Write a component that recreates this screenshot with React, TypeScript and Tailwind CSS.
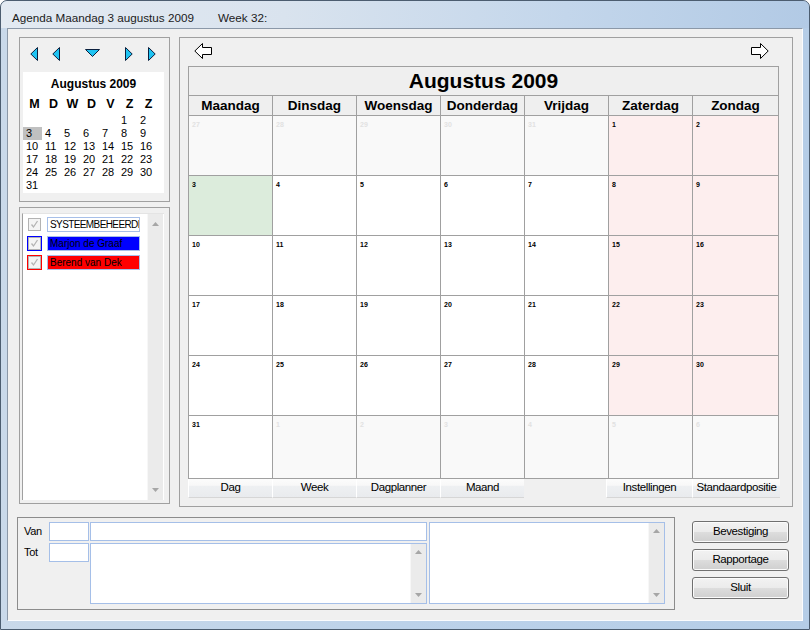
import React from "react";

const FONT = "font-['Liberation_Sans',Arial,Helvetica,sans-serif]";

function SmallTri({ d }: { d: "l" | "r" | "d" }) {
  if (d === "l")
    return (
      <svg width="8" height="14" viewBox="0 0 8 14">
        <polygon points="7.5,0.5 7.5,13.5 0.8,7" fill="#1ec3f2" stroke="#0b1f3d" strokeWidth="1" />
      </svg>
    );
  if (d === "r")
    return (
      <svg width="8" height="14" viewBox="0 0 8 14">
        <polygon points="0.5,0.5 0.5,13.5 7.2,7" fill="#1ec3f2" stroke="#0b1f3d" strokeWidth="1" />
      </svg>
    );
  return (
    <svg width="15" height="8" viewBox="0 0 15 8">
      <polygon points="0.5,0.5 14.5,0.5 7.5,7.5" fill="#1ec3f2" stroke="#0b1f3d" strokeWidth="1" />
    </svg>
  );
}

function BigArrow({ right }: { right?: boolean }) {
  return (
    <svg width="18" height="16" viewBox="0 0 18 16" className={right ? "-scale-x-100" : ""}>
      <path d="M0.8 8 L8.5 0.5 L8.5 4.5 L17.5 4.5 L17.5 11.5 L8.5 11.5 L8.5 15.5 Z" fill="white" stroke="black" strokeWidth="1" />
    </svg>
  );
}

function ScrollUp() {
  return (
    <svg width="7" height="4" viewBox="0 0 7 4">
      <polygon points="3.5,0 7,4 0,4" fill="#a6a6a6" />
    </svg>
  );
}
function ScrollDown() {
  return (
    <svg width="7" height="4" viewBox="0 0 7 4">
      <polygon points="0,0 7,0 3.5,4" fill="#a6a6a6" />
    </svg>
  );
}

function ScrollBar({ pad }: { pad: "list" | "area" }) {
  return (
    <div
      className={
        "w-[16px] h-full bg-[#ebebeb] border-l border-[#f7f7f7] flex flex-col justify-between items-center " +
        (pad === "list" ? "py-[8px]" : "py-[6px]")
      }
    >
      <ScrollUp />
      <ScrollDown />
    </div>
  );
}

function CheckBox() {
  return (
    <div className="w-[13px] h-[13px] border border-[#b3b3b3] bg-[#f4f4f4] flex items-center justify-center">
      <svg width="9" height="9" viewBox="0 0 9 9">
        <path d="M1.5 4.5 L3.5 7 L7.5 1" fill="none" stroke="#b4b4b4" strokeWidth="1.3" />
      </svg>
    </div>
  );
}

type CellKind = "out" | "in" | "we" | "today";

function buildWeeks(): { n: number; k: CellKind }[][] {
  const weeks: { n: number; k: CellKind }[][] = [];
  const first: { n: number; k: CellKind }[] = [
    { n: 27, k: "out" },
    { n: 28, k: "out" },
    { n: 29, k: "out" },
    { n: 30, k: "out" },
    { n: 31, k: "out" },
    { n: 1, k: "we" },
    { n: 2, k: "we" },
  ];
  weeks.push(first);
  let d = 3;
  for (let w = 0; w < 4; w++) {
    const row: { n: number; k: CellKind }[] = [];
    for (let i = 0; i < 7; i++) {
      row.push({ n: d, k: d === 3 ? "today" : i >= 5 ? "we" : "in" });
      d++;
    }
    weeks.push(row);
  }
  const last: { n: number; k: CellKind }[] = [{ n: 31, k: "in" }];
  for (let i = 1; i <= 6; i++) last.push({ n: i, k: "out" });
  weeks.push(last);
  return weeks;
}

const DAYS = ["Maandag", "Dinsdag", "Woensdag", "Donderdag", "Vrijdag", "Zaterdag", "Zondag"];

function MiniCalendar() {
  const rows: (number | null)[][] = [
    [null, null, null, null, null, 1, 2],
    [3, 4, 5, 6, 7, 8, 9],
    [10, 11, 12, 13, 14, 15, 16],
    [17, 18, 19, 20, 21, 22, 23],
    [24, 25, 26, 27, 28, 29, 30],
    [31, null, null, null, null, null, null],
  ];
  const heads = ["M", "D", "W", "D", "V", "Z", "Z"];
  return (
    <div className="ml-[3px] w-[141px] h-[121px] bg-white flex flex-col">
      <div className="h-[22px] flex items-center justify-center text-[12px] font-bold text-black pt-[1px]">
        Augustus 2009
      </div>
      <div className="h-[20px] grid grid-cols-[repeat(7,19px)] pl-[2px] items-center">
        {heads.map((h, i) => (
          <div key={i} className="text-center text-[12.5px] font-bold text-black leading-none">
            {h}
          </div>
        ))}
      </div>
      {rows.map((r, ri) => (
        <div key={ri} className="h-[13px] grid grid-cols-[repeat(7,19px)]">
          {r.map((n, ci) => (
            <div
              key={ci}
              className={
                "h-[13px] pl-[3px] text-[11px] leading-[13px] text-black " + (n === 3 ? "bg-[#c0c0c0]" : "")
              }
            >
              {n ?? ""}
            </div>
          ))}
        </div>
      ))}
    </div>
  );
}

function ListItem({ label, bg, frame, track }: { label: string; bg: string; frame: string; track: string }) {
  return (
    <div className="h-[15px] flex items-center">
      <div className={"ml-[4px] w-[15px] h-[15px] border flex items-center justify-center " + frame}>
        <CheckBox />
      </div>
      <div
        className={
          "ml-[5px] w-[93px] h-[15px] border border-[#a7bfe8] overflow-hidden whitespace-nowrap pl-[2px] text-[10px] leading-[13px] text-black " +
          bg +
          " " +
          track
        }
      >
        {label}
      </div>
    </div>
  );
}

function Tab({ label, w }: { label: string; w: string }) {
  return (
    <div
      className={
        "h-[19px] border-b border-b-[#d6d6d6] border-l border-l-white bg-[linear-gradient(to_bottom,#fcfcfc_0%,#f8f8f8_35%,#eef0f2_40%,#e9ebee_100%)] flex items-center justify-center text-[11.5px] tracking-[-0.4px] text-black whitespace-nowrap " +
        w
      }
    >
      {label}
    </div>
  );
}

function WinButton({ label }: { label: string }) {
  return (
    <div className="w-[97px] h-[22px] rounded-[3px] border border-[#707070] bg-[linear-gradient(to_bottom,#f2f2f2_0%,#ebebeb_50%,#dddddd_51%,#cfcfcf_100%)] shadow-[inset_0_0_0_1px_#fbfbfb] flex items-center justify-center text-[11.5px] tracking-[-0.4px] text-black">
      {label}
    </div>
  );
}

export default function App() {
  const weeks = buildWeeks();
  return (
    <div className={"w-[810px] h-[630px] overflow-hidden bg-white " + FONT}>
      <div className="w-[810px] h-[630px] flex flex-col rounded-t-[7px] border border-[#4c5d70] bg-[linear-gradient(to_right,#c9d9ea,#bcd2ea_50%,#b5cde7)] px-[6px] pb-[8px] overflow-hidden">
        {/* Title bar */}
        <div className="-mx-[6px] h-[27px] pt-[6px] pl-[11px] flex bg-[linear-gradient(to_right,#e3eaf2_0%,#d9e3ee_35%,#c3d6eb_70%,#b2cae5_100%)] text-[11.7px] leading-[21px] text-[#1b1b1b] rounded-t-[6px]">
          <span>Agenda Maandag 3 augustus 2009</span>
          <span className="ml-[24px]">Week 32:</span>
        </div>

        {/* Client area */}
        <div className="flex-1 border border-t-[#8b98a8] border-l-[#8b98a8] border-r-[#fbfcfe] border-b-[#fbfcfe] bg-[#f0f0f0] flex flex-col">
          {/* Top row */}
          <div className="flex pt-[8px] pl-[11px]">
            {/* Left column */}
            <div className="w-[151px] flex flex-col gap-[5px]">
              <div className="h-[165px] border border-[#a0a0a0] flex flex-col">
                <div className="h-[34px] flex items-start pt-[9px]">
                  <div className="ml-[10px]">
                    <SmallTri d="l" />
                  </div>
                  <div className="ml-[14px]">
                    <SmallTri d="l" />
                  </div>
                  <div className="ml-[25px] mt-[2px]">
                    <SmallTri d="d" />
                  </div>
                  <div className="ml-[25px]">
                    <SmallTri d="r" />
                  </div>
                  <div className="ml-[15px]">
                    <SmallTri d="r" />
                  </div>
                </div>
                <MiniCalendar />
              </div>
              <div className="h-[297px] border border-[#a0a0a0] pt-[5px] pl-[2px]">
                <div className="w-[142px] h-[287px] bg-white border-l border-t border-l-[#a0a0a0] border-t-[#e4e4e4] flex">
                  <div className="flex-1 flex flex-col gap-[4px] pt-[3px]">
                    <ListItem label="SYSTEEMBEHEERDER" bg="bg-white" frame="border-transparent" track="tracking-[-0.6px]" />
                    <ListItem label="Marjon de Graaf" bg="bg-[#0000ff]" frame="border-[#0000ff]" track="tracking-[0px]" />
                    <ListItem label="Berend van Dek" bg="bg-[#ff0000]" frame="border-[#ff0000]" track="tracking-[0px]" />
                  </div>
                  <div className="mr-[1px] h-full">
                    <ScrollBar pad="list" />
                  </div>
                </div>
              </div>
            </div>

            {/* Main calendar panel */}
            <div className="ml-[9px] w-[614px] h-[470px] border border-[#a0a0a0] flex flex-col">
              <div className="h-[28px] flex justify-between items-start pt-[5px] pl-[14px] pr-[23px]">
                <BigArrow />
                <BigArrow right />
              </div>
              <div className="ml-[8px] w-[591px] grid grid-cols-[84px_84px_84px_84px_84px_84px_86px] border-l border-t border-[#a0a0a0]">
                <div className="col-span-7 h-[29px] border-r border-b border-[#a0a0a0] bg-[#efefef] flex items-center justify-center text-[21px] font-bold leading-[28px] text-black">
                  Augustus 2009
                </div>
                {DAYS.map((d) => (
                  <div
                    key={d}
                    className="h-[20px] border-r border-b border-[#a0a0a0] bg-[#efefef] flex items-center justify-center text-[13.5px] font-bold text-black leading-none pt-[1px]"
                  >
                    {d}
                  </div>
                ))}
                {weeks.map((w, wi) =>
                  w.map((c, ci) => (
                    <div
                      key={wi + "-" + ci}
                      className={
                        "border-r border-b border-[#a0a0a0] pl-[3px] pt-[5px] text-[7px] font-bold leading-none " +
                        (wi === 5 ? "h-[63px] " : "h-[60px] ") +
                        (c.k === "out"
                          ? "bg-[#f9f9f9] text-[#e2e2e2]"
                          : c.k === "we"
                          ? "bg-[#fdeeee] text-black"
                          : c.k === "today"
                          ? "bg-[#dcecdc] text-black"
                          : "bg-white text-black")
                      }
                    >
                      {c.n}
                    </div>
                  ))
                )}
              </div>
              <div className="ml-[8px] w-[592px] flex">
                <Tab label="Dag" w="w-[84px]" />
                <Tab label="Week" w="w-[84px]" />
                <Tab label="Dagplanner" w="w-[84px]" />
                <Tab label="Maand" w="w-[84px]" />
                <div className="flex-1" />
                <Tab label="Instellingen" w="w-[86px]" />
                <Tab label="Standaardpositie" w="w-[88px]" />
              </div>
            </div>
          </div>

          {/* Bottom row */}
          <div className="flex mt-[10px] pl-[9px]">
            <div className="w-[658px] h-[93px] border border-[#8c8c8c] flex pt-[4px] pl-[5px]">
              <div className="w-[26px] flex flex-col gap-[2px] text-[11px] tracking-[-0.3px] text-black">
                <div className="h-[19px] flex items-center pl-[1px]">Van</div>
                <div className="h-[19px] flex items-center pl-[1px]">Tot</div>
              </div>
              <div className="w-[40px] flex flex-col gap-[2px]">
                <div className="h-[19px] bg-white border border-[#a5bfe8]" />
                <div className="h-[19px] bg-white border border-[#a5bfe8]" />
              </div>
              <div className="ml-[1px] w-[337px] flex flex-col gap-[2px]">
                <div className="h-[19px] bg-white border border-[#a5bfe8]" />
                <div className="h-[61px] bg-white border border-[#a5bfe8] flex justify-end">
                  <ScrollBar pad="area" />
                </div>
              </div>
              <div className="ml-[2px] w-[236px] h-[82px] bg-white border border-[#a5bfe8] flex justify-end">
                <ScrollBar pad="area" />
              </div>
            </div>
            <div className="ml-[17px] pt-[4px] flex flex-col gap-[6px]">
              <WinButton label="Bevestiging" />
              <WinButton label="Rapportage" />
              <WinButton label="Sluit" />
            </div>
          </div>
        </div>
      </div>
    </div>
  );
}
